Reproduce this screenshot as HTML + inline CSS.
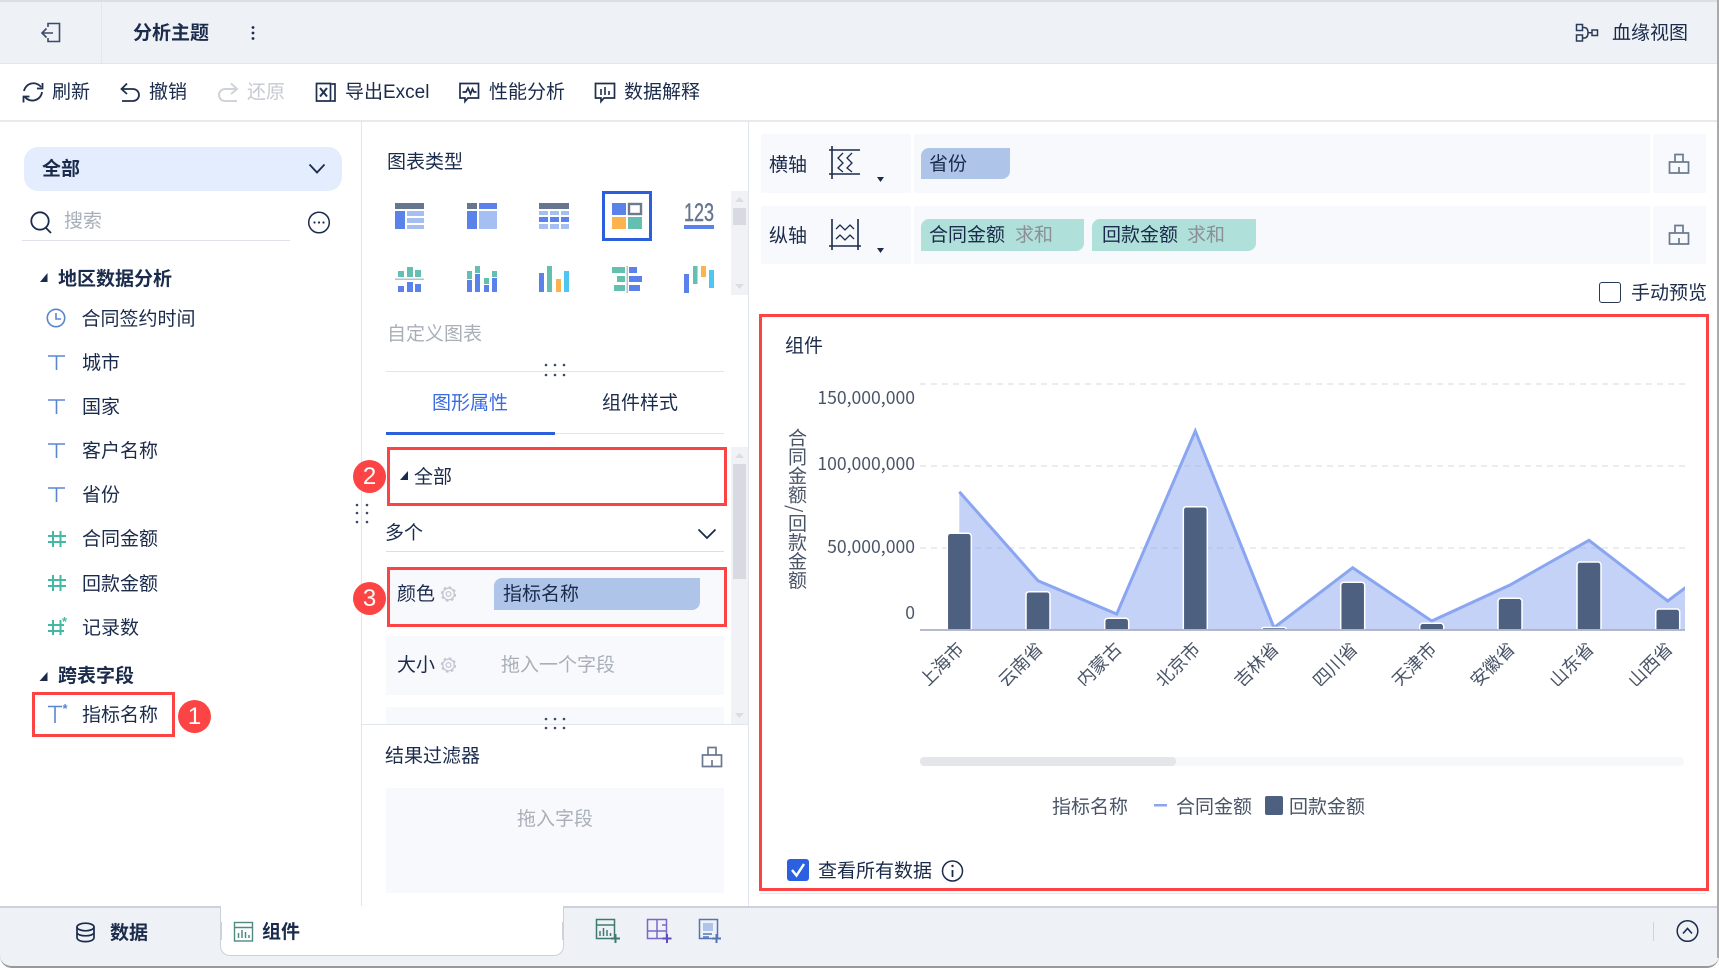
<!DOCTYPE html>
<html lang="zh"><head><meta charset="utf-8"><title>分析主题</title>
<style>
html,body{margin:0;padding:0;background:#fff}
#w{position:relative;width:1719px;height:968px;overflow:hidden;background:#fff;font-family:"Liberation Sans","Noto Sans CJK SC",sans-serif;color:#1b2b4b;font-size:19px}
.b{position:absolute;box-sizing:border-box}
.t{position:absolute;white-space:nowrap;line-height:20px;height:20px;margin-top:2px}
.g{color:#a9afb9}
.r{position:absolute;box-sizing:border-box;border:3px solid #fd4444}
.c{position:absolute;width:33px;height:33px;border-radius:50%;background:#fd4444;color:#fff;font-size:24px;line-height:33px;text-align:center}
svg{position:absolute;left:0;top:0}
.bd{font-weight:700}
</style></head><body><div id="w">
<!-- backgrounds -->
<div class="b" style="left:0;top:0;width:1719px;height:64px;background:#eef1f6;border-top:2px solid #dcdee2;border-bottom:1px solid #e1e5ee"></div>
<div class="b" style="left:101px;top:2px;width:1px;height:62px;background:#e4e7ee"></div>
<div class="b" style="left:0;top:120px;width:1719px;height:2px;background:#e8e9ec"></div>
<div class="b" style="left:361px;top:121px;width:1px;height:786px;background:#e1e5ee"></div>
<div class="b" style="left:748px;top:121px;width:1px;height:786px;background:#e1e5ee"></div>
<div class="b" style="left:24px;top:147px;width:318px;height:44px;background:#e4edfd;border-radius:14px"></div>
<div class="b" style="left:22px;top:240px;width:268px;height:1px;background:#dfe2ea"></div>
<div class="b" style="left:731px;top:191px;width:17px;height:104px;background:#f1f2f5"></div>
<div class="b" style="left:733px;top:208px;width:13px;height:17px;background:#d7dae0"></div>
<div class="b" style="left:386px;top:371px;width:338px;height:1px;background:#e3e5ec"></div>
<div class="b" style="left:386px;top:433px;width:338px;height:1px;background:#e3e5ec"></div>
<div class="b" style="left:386px;top:432px;width:169px;height:3px;background:#2b5fdc"></div>
<div class="b" style="left:386px;top:551px;width:338px;height:1px;background:#dcdfe5"></div>
<div class="b" style="left:388px;top:568px;width:338px;height:58px;background:#f8f9fc"></div>
<div class="b" style="left:494px;top:578px;width:206px;height:32px;background:#aec4e8;border-radius:8px 0 8px 0"></div>
<div class="b" style="left:386px;top:636px;width:338px;height:59px;background:#f8f9fc"></div>
<div class="b" style="left:386px;top:707px;width:338px;height:17px;background:#f8f9fc"></div>
<div class="b" style="left:731px;top:447px;width:17px;height:277px;background:#f1f2f5"></div>
<div class="b" style="left:733px;top:464px;width:13px;height:115px;background:#d7dae0"></div>
<div class="b" style="left:362px;top:724px;width:386px;height:1px;background:#e1e5ee"></div>
<div class="b" style="left:386px;top:788px;width:338px;height:105px;background:#f8f9fc"></div>
<!-- axis rows -->
<div class="b" style="left:761px;top:134px;width:150px;height:59px;background:#f8f9fc"></div>
<div class="b" style="left:914px;top:134px;width:736px;height:59px;background:#f8f9fc"></div>
<div class="b" style="left:1653px;top:134px;width:53px;height:59px;background:#f8f9fc"></div>
<div class="b" style="left:761px;top:206px;width:150px;height:58px;background:#f8f9fc"></div>
<div class="b" style="left:914px;top:206px;width:736px;height:58px;background:#f8f9fc"></div>
<div class="b" style="left:1653px;top:206px;width:53px;height:58px;background:#f8f9fc"></div>
<div class="b" style="left:921px;top:148px;width:89px;height:31px;background:#aec4e8;border-radius:8px 0 8px 0"></div>
<div class="b" style="left:921px;top:219px;width:163px;height:32px;background:#b0e0da;border-radius:8px 0 8px 0"></div>
<div class="b" style="left:1092px;top:219px;width:164px;height:32px;background:#b0e0da;border-radius:8px 0 8px 0"></div>
<div class="b" style="left:1599px;top:282px;width:22px;height:21px;border:1.5px solid #2a3a55;border-radius:3px;background:#fff"></div>
<div class="b" style="left:760px;top:893px;width:946px;height:1px;background:#e6e8f0"></div>
<!-- footer -->
<div class="b" style="left:0;top:906px;width:1719px;height:62px;background:#eef1f6;border-top:2px solid #cdd1db;border-bottom:2px solid #999;border-radius:0 0 12px 12px"></div>
<div class="b" style="left:220px;top:906px;width:344px;height:50px;background:#fff;border:1px solid #cdd1db;border-top:none;border-radius:0 0 10px 10px"></div>
<div class="b" style="left:220px;top:922px;width:2px;height:18px;background:#cdd1db"></div>
<div class="b" style="left:562px;top:922px;width:2px;height:18px;background:#cdd1db"></div>
<div class="b" style="left:1653px;top:922px;width:1px;height:19px;background:#cfd2d9"></div>
<div class="b" style="left:1717px;top:0;width:2px;height:958px;background:#aaa"></div>
<!-- scroller chart -->
<div class="b" style="left:920px;top:757px;width:764px;height:9px;background:#f7f8f9;border-radius:4px"></div>
<div class="b" style="left:920px;top:757px;width:256px;height:9px;background:#e5e6ea;border-radius:4px"></div>
<div class="b" style="left:787px;top:859px;width:22px;height:22px;background:#2b60e0;border-radius:3px"></div>

<svg width="1719" height="968" viewBox="0 0 1719 968" fill="none">
<defs><clipPath id="cp"><rect x="920" y="370" width="765" height="316"/></clipPath></defs>
<!-- back -->
<g stroke="#3b4a66" stroke-width="1.6"><path d="M48 27V23.5H59.5V41.5H48V38"/><path d="M53 33H42M46.5 28.5L42 33L46.5 37.5"/></g>
<circle cx="253" cy="27.5" r="1.4" fill="#1b2b4b"/><circle cx="253" cy="33" r="1.4" fill="#1b2b4b"/><circle cx="253" cy="38.5" r="1.4" fill="#1b2b4b"/>
<!-- lineage -->
<g stroke="#2c3b57" stroke-width="1.5"><rect x="1576.5" y="24.5" width="6" height="6"/><rect x="1576.5" y="35" width="6" height="6"/><rect x="1592" y="30" width="5.5" height="5.5"/><path d="M1582.5 27.5H1584Q1588 27.5 1588 32.7Q1588 38 1584 38H1582.5M1588 32.7H1592"/></g>
<!-- toolbar -->
<g stroke="#1f2f4d" stroke-width="1.8">
<path d="M24 91A9.6 9.6 0 0 1 41 87M42 92A9.6 9.6 0 0 1 25 97"/><path d="M42.5 83V88.5H37M23.5 102.5V96.5H29.5"/>
<path d="M127 83.5L121.5 89L127 94"/><path d="M122 89H133A6 6 0 0 1 133 101H122"/>
</g>
<g stroke="#cfd3da" stroke-width="2"><path d="M231 83.5L237 89L231 94"/><path d="M236 89H225A6 6 0 0 0 225 101H237"/></g>
<g stroke="#1f2f4d" stroke-width="1.7" transform="translate(0 -1)">
<path d="M316.5 84.500H330.500V102H316.500Z"/><path d="M320 89L327 97.500M327 89L320 97.500" stroke-width="2"/><path d="M331.500 85H335V102H331.500"/>
<path d="M460 84.500H478.500V99H468L465 102.500V99H460Z"/><path d="M462.500 93L466 93L468 89L470.500 95L472.500 90L474 93L476.500 93"/>
<path d="M595.500 84.500H614.500V99H604L601 102.500V99H595.500Z"/><path d="M601 90V96M605 88V96M609 92V96" stroke-width="1.600"/>
</g>
<!-- left panel icons -->
<path d="M309.5 164.5L317 172.5L324.5 164.5" stroke="#1b2b4b" stroke-width="1.8"/>
<circle cx="40" cy="221" r="8.7" stroke="#1b2b4b" stroke-width="1.8"/><path d="M46 228L51 233" stroke="#1b2b4b" stroke-width="1.8"/>
<circle cx="319" cy="222.5" r="10.3" stroke="#1b2b4b" stroke-width="1.5"/><circle cx="314.5" cy="222.5" r="1.1" fill="#1b2b4b"/><circle cx="319" cy="222.5" r="1.1" fill="#1b2b4b"/><circle cx="323.5" cy="222.5" r="1.1" fill="#1b2b4b"/>
<path d="M47.5 273V282H40Z M47.5 672V681H39.5Z" fill="#1b2b4b"/>
<path d="M408 471V480H400Z" fill="#1b2b4b"/>
<circle cx="56" cy="318" r="8.7" stroke="#5a85d0" stroke-width="1.6"/><path d="M56 313V319H61" stroke="#5a85d0" stroke-width="1.6"/>
<g stroke="#5a85d0" stroke-width="1.6">
<path d="M48 356H65M56.5 356V370"/><path d="M48 400H65M56.5 400V414"/><path d="M48 444H65M56.5 444V458"/><path d="M48 488H65M56.5 488V502"/><path d="M48 706.5H62M55 706.5V723"/>
</g>
<g stroke="#44b8a5" stroke-width="2">
<path d="M53 531V547M60.5 531V547M48 536H66M48 542H66"/>
<path d="M53 575V591M60.5 575V591M48 580H66M48 586H66"/>
<path d="M53 620V635M60.5 620V635M48 625H64M48 631H64"/>
</g>
<text x="62" y="626" font-size="13" fill="#44b8a5" font-weight="700" font-family="Liberation Sans">*</text>
<text x="62.5" y="713" font-size="13" fill="#5a85d0" font-weight="700" font-family="Liberation Sans">*</text>
<g fill="#3b4a66">
<circle cx="357" cy="505" r="1.3"/><circle cx="367" cy="505" r="1.3"/><circle cx="357" cy="513" r="1.3"/><circle cx="367" cy="513" r="1.3"/><circle cx="357" cy="522" r="1.3"/><circle cx="367" cy="522" r="1.3"/>
<circle cx="546" cy="365" r="1.3"/><circle cx="555" cy="365" r="1.3"/><circle cx="564" cy="365" r="1.3"/><circle cx="546" cy="375" r="1.3"/><circle cx="555" cy="375" r="1.3"/><circle cx="564" cy="375" r="1.3"/>
<circle cx="546" cy="719" r="1.3"/><circle cx="555" cy="719" r="1.3"/><circle cx="564" cy="719" r="1.3"/><circle cx="546" cy="728" r="1.3"/><circle cx="555" cy="728" r="1.3"/><circle cx="564" cy="728" r="1.3"/>
</g>
<!-- chart type icons -->
<g fill="#66768f"><rect x="395" y="203" width="29" height="6"/><rect x="467" y="203" width="10" height="6"/><rect x="539" y="203" width="30" height="6"/></g>
<g fill="#5b81ea"><rect x="395" y="211" width="10" height="18"/><rect x="479" y="203" width="18" height="6"/><rect x="467" y="211" width="10" height="18"/><rect x="539" y="217" width="9" height="5"/><rect x="550" y="217" width="9" height="5"/><rect x="561" y="217" width="8" height="5"/><rect x="612" y="203" width="14" height="12"/><rect x="684" y="225" width="30" height="4"/></g>
<g fill="#a5bff3"><rect x="407" y="211" width="17" height="5"/><rect x="407" y="218" width="17" height="5"/><rect x="407" y="225" width="17" height="4"/><rect x="479" y="211" width="18" height="18"/><rect x="539" y="211" width="9" height="4"/><rect x="550" y="211" width="9" height="4"/><rect x="561" y="211" width="8" height="4"/><rect x="539" y="224" width="9" height="5"/><rect x="550" y="224" width="9" height="5"/><rect x="561" y="224" width="8" height="5"/></g>
<rect x="603.5" y="192.5" width="47" height="47" stroke="#2b5fdc" stroke-width="3"/>
<rect x="629" y="204" width="12" height="10" stroke="#6b7a90" stroke-width="2.4"/>
<rect x="612" y="217" width="14" height="12" fill="#fcb24f"/><rect x="628" y="217" width="14" height="12" fill="#63bfb0"/>
<text x="684" y="221" font-size="25" fill="#66768f" stroke="#66768f" stroke-width=".4" textLength="30" lengthAdjust="spacingAndGlyphs" font-family="Liberation Sans">123</text>
<g fill="#63bfb0"><rect x="398" y="271" width="6" height="6"/><rect x="407" y="267" width="6" height="10"/><rect x="415" y="270" width="6" height="7"/>
<rect x="467" y="271" width="5" height="8"/><rect x="475" y="266" width="5" height="7"/><rect x="484" y="278" width="5" height="6"/><rect x="492" y="271" width="5" height="6"/>
<rect x="547" y="266" width="5" height="26"/>
<rect x="612" y="267" width="13" height="6"/><rect x="617" y="276" width="8" height="6"/><rect x="614" y="285" width="11" height="6"/>
<rect x="693" y="266" width="4.500" height="18"/></g>
<rect x="395" y="278.500" width="29" height="1.500" fill="#b9bfca"/>
<g fill="#5b81ea"><rect x="398" y="286" width="6" height="6"/><rect x="407" y="282" width="6" height="10"/><rect x="415" y="284" width="6" height="8"/>
<rect x="467" y="280" width="5" height="12"/><rect x="475" y="274" width="5" height="18"/><rect x="484" y="285" width="5" height="7"/><rect x="492" y="278" width="5" height="14"/>
<rect x="539" y="273" width="5" height="19"/>
<rect x="629" y="267" width="8" height="6"/><rect x="629" y="276" width="13" height="6"/><rect x="629" y="285" width="11" height="6"/>
<rect x="684" y="274" width="5" height="19"/></g>
<rect x="556" y="279" width="5" height="13" fill="#fcb24f"/><rect x="701" y="266" width="5" height="11" fill="#fcb24f"/>
<rect x="564" y="271" width="5" height="21" fill="#4fc6f0"/><rect x="709" y="270" width="5" height="18" fill="#4fc6f0"/>
<rect x="626.500" y="266" width="1.500" height="27" fill="#b9bfca"/>
<!-- scroll arrows -->
<g fill="#dadde3"><path d="M739.500 197L744 202H735ZM739.500 289L744 284H735Z"/><path d="M739.500 453L744 458H735ZM739.500 718L744 713H735Z"/></g>
<path d="M698.500 529.500L707 538L715.500 529.500" stroke="#1b2b4b" stroke-width="1.800"/>
<!-- gears -->
<g stroke="#c3c8d1">
<circle cx="448.500" cy="594" r="5.800" stroke-width="1.300"/><circle cx="448.500" cy="594" r="6.800" stroke-width="1.800" stroke-dasharray="2.700 2.640"/><circle cx="448.500" cy="594" r="2.400" stroke-width="1.300"/>
<circle cx="448.500" cy="665" r="5.800" stroke-width="1.300"/><circle cx="448.500" cy="665" r="6.800" stroke-width="1.800" stroke-dasharray="2.700 2.640"/><circle cx="448.500" cy="665" r="2.400" stroke-width="1.300"/>
</g>
<!-- brushes -->
<g stroke="#6b7a90" stroke-width="1.700">
<path d="M1675 162V154.500H1683V162M1669.500 162H1688.500V173H1669.500ZM1679 167V173"/>
<path d="M1675 233V225.500H1683V233M1669.500 233H1688.500V244H1669.500ZM1679 238V244"/>
<path d="M708 755V747.500H716V755M702.500 755H721.500V766.500H702.500ZM712 760V766.500"/>
</g>
<!-- axis icons -->
<g stroke="#1b2b4b" stroke-width="1.600">
<path d="M832 146V179M829 150H860M829 174H860"/>
<path d="M843 153L838 158L843 163L838 168L843 172M852 153L847 158L852 163L847 168L852 172" stroke-width="1.300"/>
<path d="M832 219V250M858 219V250M829 246H861"/>
<path d="M836 229L840 225L845 230L850 225L854 229M836 239L840 235L845 240L850 235L854 239" stroke-width="1.300"/>
</g>
<path d="M877 177H884L880.500 182ZM877 248H884L880.500 253Z" fill="#1b2b4b"/>
<!-- chart -->
<g stroke="#ececef" stroke-width="2" stroke-dasharray="6 5"><path d="M920 384H1685M920 466H1685M920 548H1685"/></g>
<g clip-path="url(#cp)">
<path d="M959.300 630V491.700L1038 580.700L1116.700 614L1195.300 431L1274 627.700L1352.700 567.700L1431.700 621L1510 585L1589 540.300L1667.700 601L1746 542V630Z" fill="#8aa6f1" fill-opacity=".5"/>
<path d="M959.300 491.700L1038 580.700L1116.700 614L1195.300 431L1274 627.700L1352.700 567.700L1431.700 621L1510 585L1589 540.300L1667.700 601L1746 542" stroke="#8aa6f1" stroke-width="3"/>
</g>
<g fill="#4d6080" stroke="#fff" stroke-width="1.500">
<path d="M947.300 630V536.300a3 3 0 0 1 3-3h18a3 3 0 0 1 3 3V630Z"/>
<path d="M1026 630V594.700a3 3 0 0 1 3-3h18a3 3 0 0 1 3 3V630Z"/>
<path d="M1104.700 630V621.300a3 3 0 0 1 3-3h18a3 3 0 0 1 3 3V630Z"/>
<path d="M1183.300 630V509.700a3 3 0 0 1 3-3h18a3 3 0 0 1 3 3V630Z"/>
<path d="M1262 630V629a1.500 1.500 0 0 1 1.500-1.500h21a1.500 1.500 0 0 1 1.500 1.500V630Z"/>
<path d="M1340.700 630V585.300a3 3 0 0 1 3-3h18a3 3 0 0 1 3 3V630Z"/>
<path d="M1419.700 630V626.300a3 3 0 0 1 3-3h18a3 3 0 0 1 3 3V630Z"/>
<path d="M1498 630V601.300a3 3 0 0 1 3-3h18a3 3 0 0 1 3 3V630Z"/>
<path d="M1577 630V565a3 3 0 0 1 3-3h18a3 3 0 0 1 3 3V630Z"/>
<path d="M1655.700 630V612a3 3 0 0 1 3-3h18a3 3 0 0 1 3 3V630Z"/>
</g>
<path d="M920 630H1685" stroke="#a9aec4" stroke-opacity=".85" stroke-width="2"/>
<g font-family="Noto Sans CJK SC,Liberation Sans,sans-serif" font-size="17.600" fill="#4a5568" text-anchor="end">
<text x="915" y="404">150,000,000</text><text x="915" y="470">100,000,000</text><text x="915" y="553">50,000,000</text><text x="915" y="619">0</text>
</g>
<g clip-path="url(#cp)" font-family="Liberation Sans,Noto Sans CJK SC,sans-serif" font-size="18" fill="#4a5568" text-anchor="end">
<text transform="translate(965 650) rotate(-45)">上海市</text>
<text transform="translate(1044 650) rotate(-45)">云南省</text>
<text transform="translate(1122.700 650) rotate(-45)">内蒙古</text>
<text transform="translate(1201.300 650) rotate(-45)">北京市</text>
<text transform="translate(1280 650) rotate(-45)">吉林省</text>
<text transform="translate(1358.700 650) rotate(-45)">四川省</text>
<text transform="translate(1437.700 650) rotate(-45)">天津市</text>
<text transform="translate(1516 650) rotate(-45)">安徽省</text>
<text transform="translate(1595 650) rotate(-45)">山东省</text>
<text transform="translate(1673.700 650) rotate(-45)">山西省</text>
</g>
<rect x="1154" y="804" width="13" height="2.500" fill="#8aa6f1"/>
<rect x="1265" y="796" width="18" height="19" rx="2" fill="#4d6080"/>
<path d="M792 870L796.500 875.500L804 864" stroke="#fff" stroke-width="2.500"/>
<circle cx="952.500" cy="871" r="10" stroke="#1b2b4b" stroke-width="1.500"/><path d="M952.500 870V877" stroke="#1b2b4b" stroke-width="1.800"/><circle cx="952.500" cy="866" r="1.200" fill="#1b2b4b"/>
<!-- footer icons -->
<g stroke="#1b2b4b" stroke-width="1.700">
<ellipse cx="85.500" cy="927" rx="8.500" ry="3.800"/><path d="M77 927V937.500C77 943 94 943 94 937.500V927M77 932.300C77 937 94 937 94 932.300"/>
</g>
<g stroke="#4f8a80" stroke-width="1.400"><rect x="234.500" y="922.500" width="18" height="18.500"/><path d="M234.500 927.500H252.500"/><path d="M238.500 938V933M242 938V930M245.500 938V932M249 938V935" stroke-width="1.500"/></g>
<g stroke="#3f7a70" stroke-width="1.500"><rect x="596.500" y="919.500" width="18" height="19"/><path d="M596.500 925H614.500"/><path d="M600 936V931M603.500 936V928M607 936V930M610.500 936V933"/><path d="M615.500 934V943M611 938.500H620" stroke-width="2"/></g>
<g stroke="#7a68c9" stroke-width="1.500"><rect x="647.500" y="919.500" width="19" height="19"/><path d="M657 919.500V938.500M647.500 931H666.500M662 925H666.500"/><path d="M667 934V943M662.500 938.500H671.500" stroke="#5b4cc0" stroke-width="2"/></g>
<g stroke="#5474b8" stroke-width="1.500"><rect x="699.500" y="919.500" width="18" height="19"/><rect x="703" y="923" width="10" height="8" fill="#aec4e8" stroke="none"/><path d="M703 934H712M703 937H709"/><path d="M716.500 934V943M712 938.500H721" stroke-width="2"/></g>
<circle cx="1687.500" cy="931" r="10.300" stroke="#1b2b4b" stroke-width="1.500"/><path d="M1683 933.500L1687.500 928.500L1692 933.500" stroke="#1b2b4b" stroke-width="1.600"/>
</svg>

<!-- text -->
<div class="t bd" style="left:133px;top:22px">分析主题</div>
<div class="t" style="left:1612px;top:22px">血缘视图</div>
<div class="t" style="left:52px;top:81px">刷新</div>
<div class="t" style="left:149px;top:81px">撤销</div>
<div class="t" style="left:247px;top:81px;color:#c5c9d1">还原</div>
<div class="t" style="left:345px;top:81px">导出Excel</div>
<div class="t" style="left:489px;top:81px">性能分析</div>
<div class="t" style="left:624px;top:81px">数据解释</div>
<div class="t bd" style="left:42px;top:158px">全部</div>
<div class="t g" style="left:64px;top:210px">搜索</div>
<div class="t bd" style="left:58px;top:268px">地区数据分析</div>
<div class="t" style="left:81.500px;top:308px">合同签约时间</div>
<div class="t" style="left:82px;top:352px">城市</div>
<div class="t" style="left:82px;top:396px">国家</div>
<div class="t" style="left:82px;top:440px">客户名称</div>
<div class="t" style="left:82px;top:484px">省份</div>
<div class="t" style="left:82px;top:528px">合同金额</div>
<div class="t" style="left:82px;top:573px">回款金额</div>
<div class="t" style="left:82px;top:617px">记录数</div>
<div class="t bd" style="left:58px;top:665px">跨表字段</div>
<div class="t" style="left:82px;top:704px">指标名称</div>
<div class="t" style="left:387px;top:151px">图表类型</div>
<div class="t g" style="left:387px;top:323px">自定义图表</div>
<div class="t" style="left:432px;top:392px;color:#3b6be0">图形属性</div>
<div class="t" style="left:602px;top:392px">组件样式</div>
<div class="t" style="left:414px;top:466px">全部</div>
<div class="t" style="left:385px;top:522px">多个</div>
<div class="t" style="left:397px;top:583px">颜色</div>
<div class="t" style="left:503px;top:583px">指标名称</div>
<div class="t" style="left:397px;top:654px">大小</div>
<div class="t g" style="left:501px;top:654px">拖入一个字段</div>
<div class="t" style="left:385px;top:745px">结果过滤器</div>
<div class="t g" style="left:517px;top:808px">拖入字段</div>
<div class="t" style="left:769px;top:154px">横轴</div>
<div class="t" style="left:769px;top:225px">纵轴</div>
<div class="t" style="left:929px;top:153px">省份</div>
<div class="t" style="left:929px;top:224px">合同金额</div>
<div class="t" style="left:1015px;top:224px;color:#8e8e98">求和</div>
<div class="t" style="left:1102px;top:224px">回款金额</div>
<div class="t" style="left:1187px;top:224px;color:#8e8e98">求和</div>
<div class="t" style="left:1631px;top:282px">手动预览</div>
<div class="t" style="left:785px;top:335px">组件</div>
<div style="position:absolute;left:785px;top:428px;width:20px;writing-mode:vertical-rl;font-size:19px;line-height:20px;color:#4a5568;white-space:nowrap">合同金额<span style="margin:1px 0;font-family:'Noto Sans CJK SC',sans-serif">/</span>回款金额</div>
<div class="t" style="left:1052px;top:796px;color:#4a5568">指标名称</div>
<div class="t" style="left:1176px;top:796px;color:#4a5568">合同金额</div>
<div class="t" style="left:1289px;top:796px;color:#4a5568">回款金额</div>
<div class="t" style="left:818px;top:860px">查看所有数据</div>
<div class="t bd" style="left:110px;top:922px">数据</div>
<div class="t bd" style="left:262px;top:921px">组件</div>

<!-- annotations -->
<div class="r" style="left:32px;top:692px;width:143px;height:45px"></div>
<div class="r" style="left:387px;top:447px;width:340px;height:59px"></div>
<div class="r" style="left:387px;top:567px;width:340px;height:60px"></div>
<div class="r" style="left:759px;top:314px;width:950px;height:577px"></div>
<div class="c" style="left:178px;top:700px">1</div>
<div class="c" style="left:353px;top:460px">2</div>
<div class="c" style="left:353px;top:582px">3</div>
</div></body></html>
